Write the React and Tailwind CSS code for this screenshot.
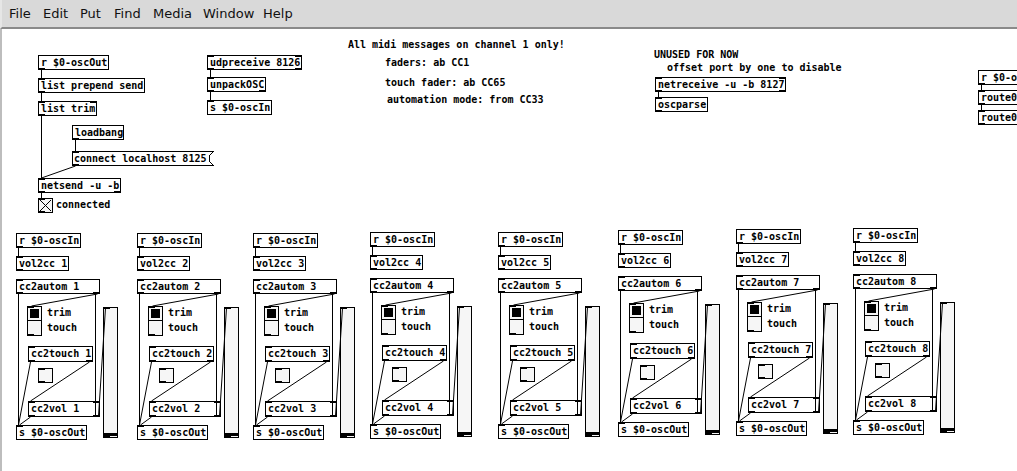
import React from "react";

const OY = 29;
const TXT = "font-['DejaVu_Sans_Mono',monospace] text-[10px] font-bold text-black whitespace-pre";

const MENU = [
  ["File", "w-[34px]"],
  ["Edit", "w-[37px]"],
  ["Put", "w-[34px]"],
  ["Find", "w-[39px]"],
  ["Media", "w-[50px]"],
  ["Window", "w-[60px]"],
  ["Help", "w-[40px]"],
];

const STRIPS = [
  [0, 0], [121, 0], [237, 0], [354, -1], [482, -1], [602, -3], [720, -4], [837, -5],
];

function Box({ x, y, w, h = 15, text, ins = "l", outs = "l" }) {
  return (
    <div
      className="absolute box-border border border-black bg-white"
      style={{ left: x, top: y - OY, width: w, height: h }}
    >
      <span className={`absolute left-[2px] top-0 leading-[13px] ${TXT}`}>{text}</span>
      {ins.includes("l") && <span className="absolute -left-px -top-px h-[2px] w-[7px] bg-black" />}
      {ins.includes("r") && <span className="absolute -right-px -top-px h-[2px] w-[7px] bg-black" />}
      {outs.includes("l") && <span className="absolute -left-px -bottom-px h-[2px] w-[7px] bg-black" />}
      {outs.includes("r") && <span className="absolute -right-px -bottom-px h-[2px] w-[7px] bg-black" />}
    </div>
  );
}

function Msg({ x, y, w, text }) {
  return (
    <div className="absolute" style={{ left: x, top: y - OY, width: w + 5, height: 15 }}>
      <svg className="absolute inset-0" width={w + 5} height={15} shapeRendering="crispEdges">
        <polyline
          points={`0.5,0.5 ${w + 4.5},0.5 ${w + 0.5},4.5 ${w + 0.5},10.5 ${w + 4.5},14.5 0.5,14.5 0.5,0.5`}
          fill="white"
          stroke="black"
        />
      </svg>
      <span className="absolute left-0 top-0 h-[2px] w-[7px] bg-black" />
      <span className="absolute left-0 bottom-0 h-[2px] w-[7px] bg-black" />
      <span className={`absolute left-[2px] top-[1px] leading-[13px] ${TXT}`}>{text}</span>
    </div>
  );
}

function Comment({ x, y, text }) {
  return (
    <span className={`absolute leading-[12px] ${TXT}`} style={{ left: x, top: y - 6 - OY }}>
      {text}
    </span>
  );
}

function Toggle({ x, y, cross }) {
  return (
    <div
      className="absolute box-border border border-black bg-[#f6f6f6]"
      style={{ left: x, top: y - OY, width: 15, height: 15 }}
    >
      <span className="absolute -left-px -top-px h-[2px] w-[7px] bg-black" />
      <span className="absolute -left-px -bottom-px h-[2px] w-[7px] bg-black" />
      {cross && (
        <svg className="absolute inset-0" width="13" height="13">
          <line x1="1" y1="1" x2="12" y2="12" stroke="black" />
          <line x1="12" y1="1" x2="1" y2="12" stroke="black" />
        </svg>
      )}
    </div>
  );
}

function Radio({ x, y }) {
  return (
    <div
      className="absolute box-border flex flex-col border border-black bg-[#f6f6f6]"
      style={{ left: x, top: y - OY, width: 15, height: 30 }}
    >
      <div className="flex h-[14px] items-center justify-center border-b border-black">
        <div className="h-[9px] w-[9px] bg-black" />
      </div>
      <div className="flex-1" />
      <span className="absolute -left-px -top-px h-[2px] w-[7px] bg-black" />
      <span className="absolute -left-px -bottom-px h-[2px] w-[7px] bg-black" />
    </div>
  );
}

function Slider({ x, y }) {
  return (
    <div
      className="absolute box-border flex flex-col justify-end border border-black bg-[#f6f6f6] pb-[1px]"
      style={{ left: x, top: y - OY, width: 15, height: 131 }}
    >
      <div className="h-[3px] w-full bg-black" />
      <span className="absolute -left-px -top-px h-[2px] w-[7px] bg-black" />
      <span className="absolute -left-px -bottom-px h-[2px] w-[7px] bg-black" />
    </div>
  );
}

function Strip({ n, dx, dy }) {
  const X = (v) => v + dx;
  const Y = (v) => v + dy;
  return (
    <>
      <Box x={X(16)} y={Y(233)} w={65} text="r $0-oscIn" ins="" />
      <Box x={X(16)} y={Y(256)} w={53} text={`vol2cc ${n}`} />
      <Box x={X(16)} y={Y(279)} w={84} text={`cc2autom ${n}`} outs="lr" />
      <Radio x={X(27)} y={Y(306)} />
      <Comment x={X(47)} y={Y(313)} text="trim" />
      <Comment x={X(47)} y={Y(328)} text="touch" />
      <Box x={X(28)} y={Y(346)} w={65} h={16} text={`cc2touch ${n}`} outs="lr" />
      <Toggle x={X(38)} y={Y(368)} />
      <Box x={X(28)} y={Y(401)} w={72} h={16} text={`cc2vol ${n}`} ins="lr" outs="lr" />
      <Box x={X(16)} y={Y(425)} w={71} text="s $0-oscOut" outs="" />
      <Slider x={X(103)} y={Y(307)} />
    </>
  );
}

const stripLines = (dx, dy) => [
  [18, 248, 18, 256],
  [18, 294, 18, 425],
  [97, 294, 31, 306],
  [95, 294, 95, 417],
  [98, 416, 105, 308],
  [30, 362, 18, 425],
  [89, 362, 30, 401],
  [30, 417, 19, 425],
].map(([a, b, c, d]) => [a + dx, b + dy, c + dx, d + dy]);

const LINES = [
  [41, 70, 41, 78],
  [41, 93, 41, 101],
  [41, 116, 41, 178],
  [75, 140, 75, 151],
  [75, 166, 41, 178],
  [41, 193, 41, 198],
  [210, 70, 210, 77],
  [210, 92, 210, 100],
  [658, 92, 658, 97],
  [981, 85, 981, 90],
  [981, 105, 981, 110],
  ...STRIPS.flatMap(([dx, dy]) => stripLines(dx, dy)),
];

export default function App() {
  return (
    <div className="flex h-[471px] w-[1017px] flex-col overflow-hidden bg-white">
      {/* menu bar */}
      <div className="flex h-[29px] shrink-0 items-center border-b-2 border-l-2 border-b-[#8a8a8a] border-l-[#e6e6e6] bg-[#d9d9d9] pl-[7px] pt-[1px] font-['DejaVu_Sans',sans-serif] text-[13px] text-[#111]">
        {MENU.map(([m, w]) => (
          <span key={m} className={w}>
            {m}
          </span>
        ))}
      </div>

      {/* patch canvas */}
      <div className="relative flex-1 overflow-hidden border-l-2 border-[#bdbdbd]">
        <div className="absolute -left-[2px] top-0 h-full w-[1017px]">
          <Box x={38} y={55} w={71} text="r $0-oscOut" ins="" />
          <Box x={38} y={78} w={107} text="list prepend send" outs="l" />
          <Box x={38} y={101} w={59} text="list trim" ins="lr" />
          <Box x={72} y={125} w={52} text="loadbang" ins="" />
          <Msg x={72} y={151} w={137} text="connect localhost 8125" />
          <Box x={38} y={178} w={83} text="netsend -u -b" outs="lr" />
          <Toggle x={38} y={198} cross />
          <Comment x={56} y={205} text="connected" />

          <Box x={207} y={55} w={95} text="udpreceive 8126" ins="lr" outs="lr" />
          <Box x={207} y={77} w={59} text="unpackOSC" outs="lr" />
          <Box x={207} y={100} w={65} text="s $0-oscIn" outs="" />

          <Comment x={348} y={45} text="All midi messages on channel 1 only!" />
          <Comment x={385} y={63} text="faders: ab CC1" />
          <Comment x={385} y={83} text="touch fader: ab CC65" />
          <Comment x={387} y={100} text="automation mode: from CC33" />

          <Comment x={654} y={55} text="UNUSED FOR NOW" />
          <Comment x={667} y={68} text="offset port by one to disable" />
          <Box x={655} y={77} w={131} text="netreceive -u -b 8127" ins="lr" outs="lr" />
          <Box x={655} y={97} w={53} text="oscparse" />

          <Box x={978} y={70} w={71} text="r $0-oscOut" ins="" />
          <Box x={978} y={90} w={80} text="route0" ins="lr" />
          <Box x={978} y={110} w={80} text="route0" ins="lr" />

          {STRIPS.map(([dx, dy], i) => (
            <Strip key={i} n={i + 1} dx={dx} dy={dy} />
          ))}

          <svg
            className="pointer-events-none absolute left-0"
            style={{ top: -OY }}
            width="1017"
            height="471"
          >
            {LINES.map(([a, b, c, d], i) => (
              <line key={i} x1={a + 0.5} y1={b} x2={c + 0.5} y2={d} stroke="black" strokeWidth="1" />
            ))}
          </svg>
        </div>
      </div>
    </div>
  );
}
